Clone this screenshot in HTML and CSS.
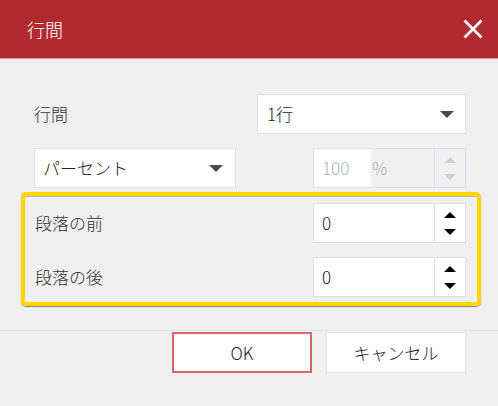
FILE: index.html
```html
<!DOCTYPE html>
<html lang="ja">
<head>
<meta charset="utf-8">
<title>行間</title>
<link rel="stylesheet" href="styles.css">
</head>
<body>
<div class="dialog">
  <header class="titlebar">
    <span class="title">行間</span>
    <button class="close" aria-label="閉じる">
      <svg width="20" height="20" viewBox="0 0 20 20"><path d="M1.5 1.5 L18.5 18.5 M18.5 1.5 L1.5 18.5" stroke="#fff" stroke-width="2.6" fill="none"/></svg>
    </button>
  </header>
  <main class="content">
    <div class="row first">
      <span class="label">行間</span>
      <div class="select wide"><span>1行</span><span class="caret"></span></div>
    </div>
    <div class="row second">
      <div class="select mode"><span>パーセント</span><span class="caret"></span></div>
      <div class="spin disabled">
        <span class="value">100</span>
        <span class="unit">%</span>
        <span class="arrows"><span class="up"></span><span class="down"></span></span>
      </div>
    </div>
    <div class="highlight">
      <div class="row">
        <span class="label">段落の前</span>
        <div class="spin">
          <span class="value">0</span>
          <span class="arrows"><span class="up"></span><span class="down"></span></span>
        </div>
      </div>
      <div class="row">
        <span class="label">段落の後</span>
        <div class="spin">
          <span class="value">0</span>
          <span class="arrows"><span class="up"></span><span class="down"></span></span>
        </div>
      </div>
    </div>
  </main>
  <footer class="footer">
    <button class="btn ok">OK</button>
    <button class="btn">キャンセル</button>
  </footer>
</div>
</body>
</html>
```
FILE: styles.css
```css
* { box-sizing: border-box; }
html, body {
  margin: 0;
  padding: 0;
  background: #f0f0f0;
  font-family: "Noto Sans CJK JP", "Noto Sans", sans-serif;
  font-weight: 300;
  color: #333;
}
.dialog {
  width: 498px;
  height: 406px;
  background: #f0f0f0;
  display: flex;
  flex-direction: column;
}
.titlebar {
  height: 59px;
  background: #b22a2f;
  border-bottom: 1px solid #d89a9d;
  display: flex;
  align-items: center;
  justify-content: space-between;
  padding: 0 15px 1px 27px;
}
.title {
  color: #fff;
  font-size: 18px;
  line-height: 20px;
}
.close {
  background: none;
  border: none;
  padding: 0;
  width: 20px;
  height: 20px;
  display: flex;
}
.content {
  padding: 35px 17px 0 21px;
  display: flex;
  flex-direction: column;
}
.row {
  display: flex;
  align-items: center;
  justify-content: space-between;
  height: 40px;
}
.content > .row {
  padding: 0 15px 0 13px;
}
.row.second { margin-top: 14px; }
.label {
  font-size: 17px;
  line-height: 20px;
  color: #333;
}
.select {
  height: 40px;
  background: #fff;
  border: 1px solid #dcdfe6;
  display: flex;
  align-items: center;
  justify-content: space-between;
  font-size: 17px;
  line-height: 20px;
  color: #222;
}
.select.wide { width: 209px; padding: 0 11px 0 9px; }
.select.mode { width: 202px; padding: 0 12px 0 8px; }
.caret {
  width: 0;
  height: 0;
  border-left: 7px solid transparent;
  border-right: 7px solid transparent;
  border-top: 7px solid #4a4a4a;
}
.spin {
  width: 153px;
  height: 40px;
  background: #fff;
  border: 1px solid #dcdfe6;
  display: flex;
  align-items: stretch;
  font-size: 17px;
  line-height: 20px;
}
.spin .value {
  flex: 1;
  display: flex;
  align-items: center;
  padding-left: 8px;
  color: #222;
}
.spin .arrows {
  width: 31px;
  border-left: 1px solid #dcdfe6;
  display: flex;
  flex-direction: column;
  align-items: center;
  justify-content: space-between;
  padding: 8px 0 7px;
}
.up, .down {
  width: 0;
  height: 0;
  border-left: 6px solid transparent;
  border-right: 6px solid transparent;
}
.up { border-bottom: 6px solid #000; }
.down { border-top: 6px solid #000; }
.spin.disabled .value {
  flex: 0 0 57px;
  color: #a9afb9;
}
.spin.disabled .unit {
  flex: 1;
  background: #f0f0f0;
  color: #a9afb9;
  display: flex;
  align-items: center;
  padding-left: 1px;
}
.spin.disabled .arrows { background: #f0f0f0; }
.spin.disabled .up { border-bottom-color: #d0d0d0; }
.spin.disabled .down { border-top-color: #d0d0d0; }
.highlight {
  margin-top: 4px;
  height: 114px;
  border: 4px solid #ffd600;
  border-radius: 5px;
  box-shadow: 0 1px 1px rgba(0,0,0,0.45), inset 0 1px 0 rgba(0,0,0,0.25);
  padding: 7px 11px 0 10px;
  display: flex;
  flex-direction: column;
  gap: 14px;
}
.footer {
  margin-top: 24px;
  border-top: 1px solid #e6e6e6;
  padding: 1px 32px 0 0;
  display: flex;
  justify-content: flex-end;
  gap: 14px;
}
.btn {
  width: 140px;
  height: 41px;
  background: #fff;
  border: 1px solid #dde1e8;
  font-family: "Noto Sans CJK JP", "Noto Sans", sans-serif;
  font-weight: 300;
  font-size: 17px;
  color: #222;
  padding: 0;
}
.btn.ok {
  border: 2px solid #d2686c;
}
```
